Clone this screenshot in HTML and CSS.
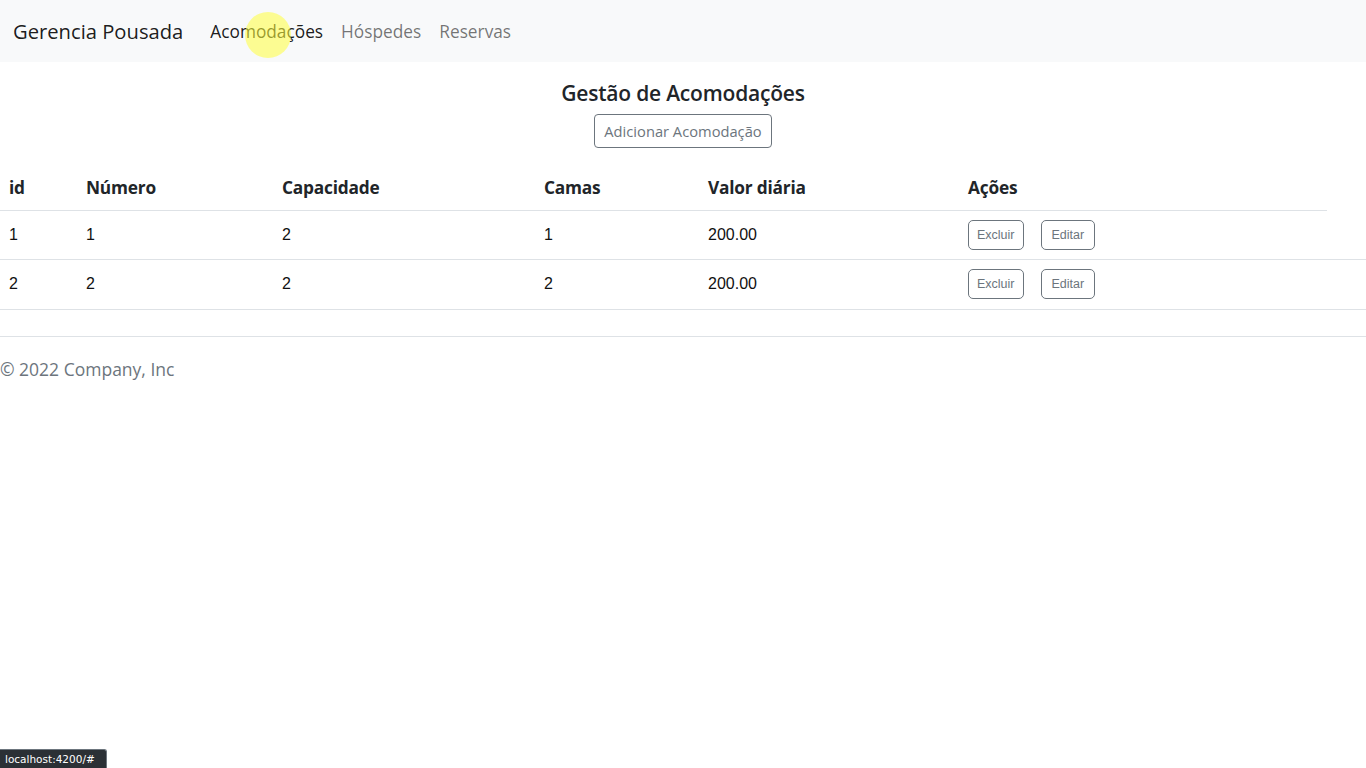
FILE: index.html
```html
<!DOCTYPE html>
<html lang="pt-BR">
<head>
<meta charset="utf-8">
<title>Gerencia Pousada</title>
<link rel="stylesheet" href="styles.css">
</head>
<body>
<nav class="navbar">
  <a class="brand" href="#">Gerencia Pousada</a>
  <ul class="nav">
    <li><a class="nav-link active" href="#">Acomodações</a></li>
    <li><a class="nav-link" href="#">Hóspedes</a></li>
    <li><a class="nav-link" href="#">Reservas</a></li>
  </ul>
  <span class="cursor-dot"></span>
</nav>
<main>
  <h1 class="title">Gestão de Acomodações</h1>
  <div class="actions"><button class="btn">Adicionar Acomodação</button></div>
  <table class="table">
    <colgroup>
      <col class="c1"><col class="c2"><col class="c3"><col class="c4"><col class="c5"><col class="c6"><col class="c7">
    </colgroup>
    <thead>
      <tr><th>id</th><th>Número</th><th>Capacidade</th><th>Camas</th><th>Valor diária</th><th>Ações</th><th class="empty"></th></tr>
    </thead>
    <tbody>
      <tr><td>1</td><td>1</td><td>2</td><td>1</td><td>200.00</td><td><div class="row-btns"><button class="btn btn-sm">Excluir</button><button class="btn btn-sm">Editar</button></div></td><td></td></tr>
      <tr><td>2</td><td>2</td><td>2</td><td>2</td><td>200.00</td><td><div class="row-btns"><button class="btn btn-sm">Excluir</button><button class="btn btn-sm">Editar</button></div></td><td></td></tr>
    </tbody>
  </table>
  <footer class="footer">
    <p>© 2022 Company, Inc</p>
  </footer>
</main>
<div class="status">localhost:4200/#</div>
</body>
</html>
```
FILE: styles.css
```css
* { box-sizing: border-box; }
html, body { margin: 0; padding: 0; background: #fff; }
body {
  font-family: "Open Sans", "Noto Sans", "DejaVu Sans", sans-serif;
  color: #212529;
  font-size: 16px;
}
.navbar {
  position: relative;
  height: 62px;
  background: #f8f9fa;
  display: flex;
  align-items: center;
  padding: 0 13px;
}
.brand {
  font-size: 20.2px;
  color: rgba(0,0,0,.9);
  text-decoration: none;
  margin-right: 27px;
}
.nav {
  list-style: none;
  margin: 0;
  padding: 0;
  display: flex;
  gap: 18px;
}
.nav-link {
  font-size: 17.3px;
  color: rgba(0,0,0,.55);
  text-decoration: none;
  font-weight: 400;
}
.nav-link.active { color: rgba(0,0,0,.9); }
.cursor-dot {
  position: absolute;
  left: 245px;
  top: 12px;
  width: 46px;
  height: 46px;
  border-radius: 50%;
  background: rgba(255,255,60,.55);
  pointer-events: none;
}
.title {
  margin: 0;
  padding-top: 17px;
  text-align: center;
  font-size: 21px;
  font-weight: 600;
  line-height: 28px;
  letter-spacing: -0.2px;
}
.actions {
  display: flex;
  justify-content: center;
  margin-top: 7px;
}
.btn {
  font-family: inherit;
  background: #fff;
  border: 1px solid #6c757d;
  color: #6c757d;
  border-radius: 4px;
  font-size: 14.7px;
  height: 34px;
  padding: 0 9px;
  font-weight: 400;
}
.table {
  border-collapse: collapse;
  width: 1366px;
  table-layout: fixed;
  margin-top: 18px;
}
.c1 { width: 77px; } .c2 { width: 196px; } .c3 { width: 262px; } .c4 { width: 164px; }
.c5 { width: 260px; } .c6 { width: 368px; } .c7 { width: 39px; }
.table th {
  text-align: left;
  font-weight: 700;
  font-size: 17.3px;
  padding: 0 9px;
  height: 44px;
  border-bottom: 1px solid #dee2e6;
  letter-spacing: -0.2px;
}
.table th.empty { border-bottom: none; }
.table td {
  font-family: "Liberation Sans", Arial, sans-serif;
  font-size: 16px;
  padding: 0 9px;
  height: 49px;
  border-bottom: 1px solid #dee2e6;
  color: #111;
}
.table tbody tr:last-child td { height: 50px; }
.row-btns { display: flex; gap: 17px; }
.btn-sm {
  font-size: 12.5px;
  height: 30px;
  padding: 0 8px;
  border-radius: 5px;
}
.btn-sm + .btn-sm { padding: 0 10px; }
.footer {
  margin-top: 26px;
  border-top: 1px solid #dee2e6;
}
.footer p {
  margin: 0;
  padding-top: 20px;
  font-size: 17.5px;
  color: #6c757d;
  font-weight: 400;
}
.status {
  position: fixed;
  left: 0;
  bottom: 0;
  height: 19px;
  width: 107px;
  background: #2b3035;
  color: #fff;
  font-family: "DejaVu Sans", sans-serif;
  font-size: 10.5px;
  line-height: 19px;
  padding-left: 5px;
  border-top-right-radius: 3px;
  border: 1px solid #6c757d;
  border-left: none;
  border-bottom: none;
}
```
